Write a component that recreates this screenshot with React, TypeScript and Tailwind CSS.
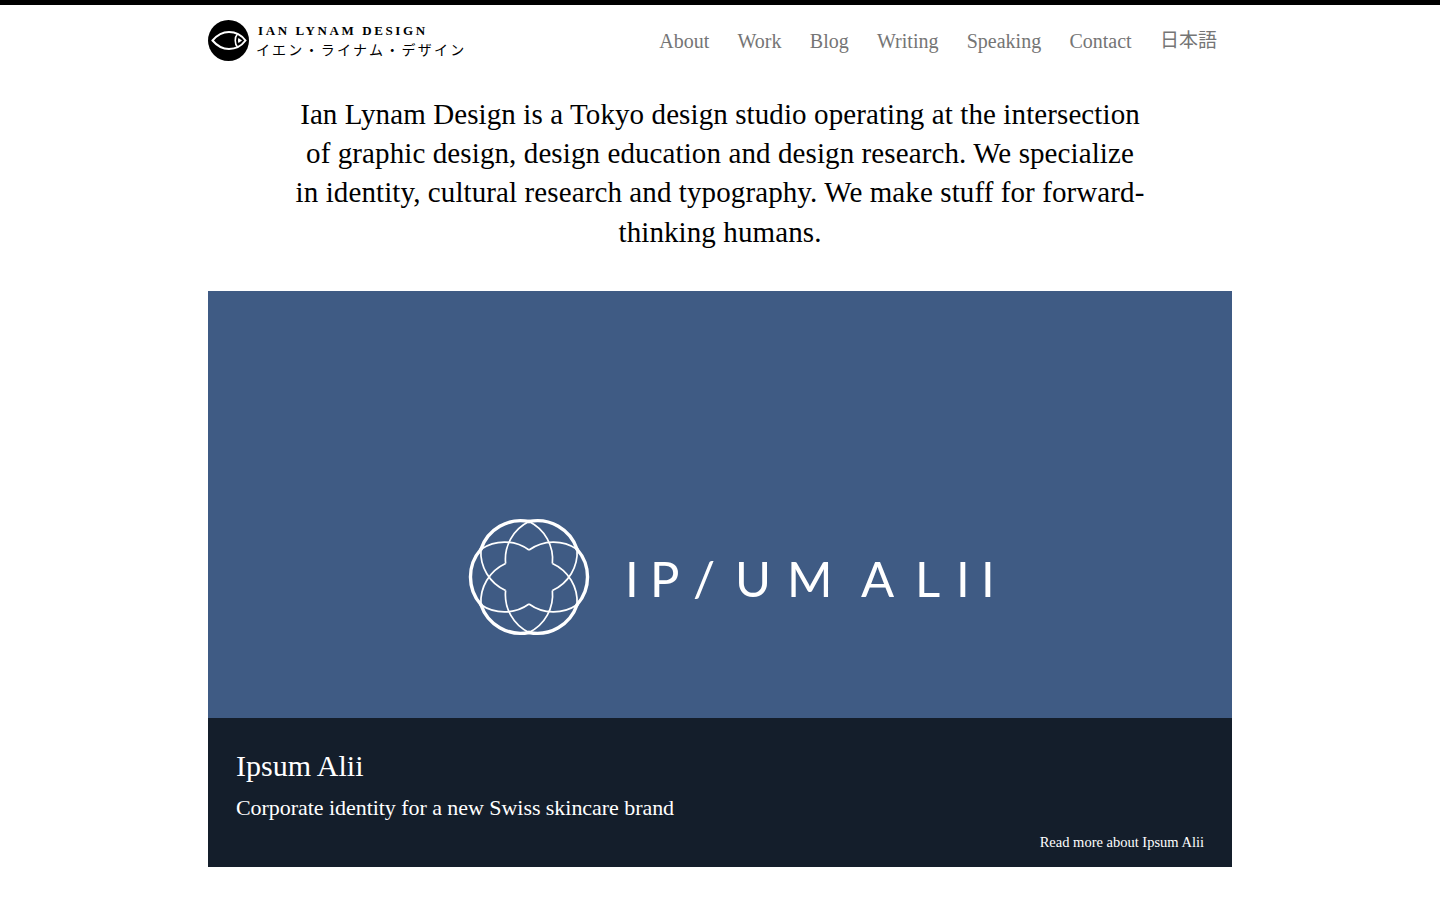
const serif = { fontFamily: '"Liberation Serif", "Noto Sans CJK JP", serif' }

const navItems = ['About', 'Work', 'Blog', 'Writing', 'Speaking', 'Contact']

function EyeLogo() {
  return (
    <svg width="41" height="41" viewBox="0 0 41 41" className="shrink-0">
      <circle cx="20.5" cy="20.5" r="20.5" fill="#000" />
      <path d="M4.5 20.5 C10 14 16 12 21 12 C26 12 33 14.5 37.5 20.5 C33 26.5 26 29 21 29 C16 29 10 27 4.5 20.5 Z" fill="none" stroke="#fff" strokeWidth="2" />
      <path d="M29.5 14 C26.5 17 26.5 24 29.5 27" fill="none" stroke="#fff" strokeWidth="1.6" />
      <path d="M30.5 18 L34 20.5 L30.5 23 C29.8 22 29.8 19 30.5 18 Z" fill="#fff" />
    </svg>
  )
}

// six lobes: heavy outer hull, each crossing sends two thin arcs in to the flower notches
function RosetteMark() {
  const c = 62
  const r = 42
  const outer = 55.5
  const notch = 27
  const crossings = [-90, -30, 30, 90, 150, 210]
  const pt = (deg: number, rad: number) => {
    const a = (deg * Math.PI) / 180
    return `${(c + rad * Math.cos(a)).toFixed(2)} ${(c + rad * Math.sin(a)).toFixed(2)}`
  }
  return (
    <svg width="124" height="124" viewBox="0 0 124 124" className="shrink-0">
      {crossings.map((a) => (
        <g key={a} fill="none" stroke="#fff">
          <path d={`M${pt(a, outer)} A${r} ${r} 0 0 0 ${pt(a - 60, notch)}`} strokeWidth="1.7" />
          <path d={`M${pt(a, outer)} A${r} ${r} 0 0 1 ${pt(a + 60, notch)}`} strokeWidth="1.7" />
          <path d={`M${pt(a, outer)} A${r} ${r} 0 0 1 ${pt(a + 60, outer)}`} strokeWidth="3.4" strokeLinecap="round" />
        </g>
      ))}
    </svg>
  )
}

export default function App() {
  return (
    <div className="min-h-screen bg-white text-black" style={serif}>
      <div className="h-[5px] bg-black" />

      <div className="w-[1024px] mx-auto">
        <header className="flex items-center justify-between pt-[15px] pr-[15px]">
          <a className="flex items-center gap-[7px]">
            <EyeLogo />
            <div className="pt-[2px]">
              <p className="text-[13px] leading-[17px] font-bold tracking-[2.6px] ml-[2px] uppercase">Ian Lynam Design</p>
              <p className="text-[14px] leading-[20px] tracking-[2.25px] mt-[2px] whitespace-nowrap">イエン・ライナム・デザイン</p>
            </div>
          </a>
          <nav className="flex items-center gap-[28.3px] text-[20px] text-[#757575]">
            {navItems.map((item) => (
              <a key={item}>{item}</a>
            ))}
            <a className="text-[19px] pt-[2px]">日本語</a>
          </nav>
        </header>

        <p className="mt-[34px] text-center text-[29px] leading-[39.2px] tracking-[0.1px]">
          Ian Lynam Design is a Tokyo design studio operating at the intersection<br />
          of graphic design, design education and design research. We specialize<br />
          in identity, cultural research and typography. We make stuff for forward-<br />
          thinking humans.
        </p>

        <section className="mt-[39px]">
          <div className="h-[427px] bg-[#3f5b84] flex items-center pl-[259px] pt-[146px]">
            <RosetteMark />
            <svg width="380" height="60" viewBox="0 0 380 60" className="ml-[32px] mt-[4px]">
              <text
                y="48"
                x="2 27 70 112 164 200 238 292 333 358"
                fill="#fff"
                fontSize="49"
                fontFamily="Lato, sans-serif"
                fontWeight="400"
              >
                IP/UM ALII
              </text>
            </svg>
          </div>
          <div className="h-[149px] bg-[#141e2b] text-white px-[28px] pt-[30px]">
            <h2 className="text-[30px] leading-[36px]">Ipsum Alii</h2>
            <p className="text-[22px] leading-[30px] mt-[9px] tracking-[-0.05px]">Corporate identity for a new Swiss skincare brand</p>
            <p className="text-[14.5px] leading-[20px] mt-[9px] text-right">Read more about Ipsum Alii</p>
          </div>
        </section>
      </div>
    </div>
  )
}
